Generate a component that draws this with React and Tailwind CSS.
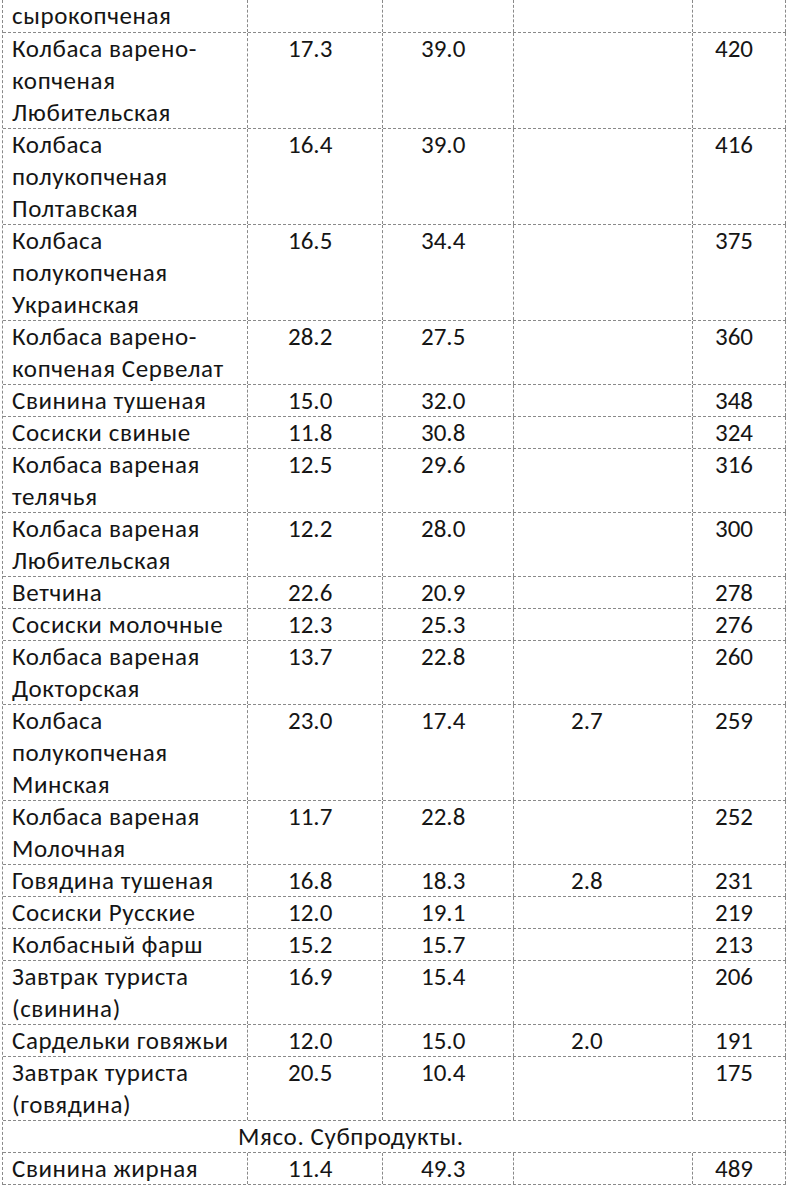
import React from 'react';

const rows = [
  { name: ['сырокопченая'], v: ['', '', '', ''] },
  { name: ['Колбаса варено-', 'копченая', 'Любительская'], v: ['17.3', '39.0', '', '420'] },
  { name: ['Колбаса', 'полукопченая', 'Полтавская'], v: ['16.4', '39.0', '', '416'] },
  { name: ['Колбаса', 'полукопченая', 'Украинская'], v: ['16.5', '34.4', '', '375'] },
  { name: ['Колбаса варено-', 'копченая Сервелат'], v: ['28.2', '27.5', '', '360'] },
  { name: ['Свинина тушеная'], v: ['15.0', '32.0', '', '348'] },
  { name: ['Сосиски свиные'], v: ['11.8', '30.8', '', '324'] },
  { name: ['Колбаса вареная', 'телячья'], v: ['12.5', '29.6', '', '316'] },
  { name: ['Колбаса вареная', 'Любительская'], v: ['12.2', '28.0', '', '300'] },
  { name: ['Ветчина'], v: ['22.6', '20.9', '', '278'] },
  { name: ['Сосиски молочные'], v: ['12.3', '25.3', '', '276'] },
  { name: ['Колбаса вареная', 'Докторская'], v: ['13.7', '22.8', '', '260'] },
  { name: ['Колбаса', 'полукопченая', 'Минская'], v: ['23.0', '17.4', '2.7', '259'] },
  { name: ['Колбаса вареная', 'Молочная'], v: ['11.7', '22.8', '', '252'] },
  { name: ['Говядина тушеная'], v: ['16.8', '18.3', '2.8', '231'] },
  { name: ['Сосиски Русские'], v: ['12.0', '19.1', '', '219'] },
  { name: ['Колбасный фарш'], v: ['15.2', '15.7', '', '213'] },
  { name: ['Завтрак туриста', '(свинина)'], v: ['16.9', '15.4', '', '206'] },
  { name: ['Сардельки говяжьи'], v: ['12.0', '15.0', '2.0', '191'] },
  { name: ['Завтрак туриста', '(говядина)'], v: ['20.5', '10.4', '', '175'] },
  { section: 'Мясо. Субпродукты.' },
  { name: ['Свинина жирная'], v: ['11.4', '49.3', '', '489'] },
];

const cellCls = 'border-r border-dashed border-[#8a8a8a] h-full';

export default function App() {
  return (
    <div
      className="w-[790px] h-[1188px] overflow-hidden bg-white pl-[2px] text-[#151515] text-[25px] leading-[32px]"
      style={{ fontFamily: 'Carlito, Calibri, "Open Sans", sans-serif' }}
    >
      <div className="w-[784px] border-l border-dashed border-[#8a8a8a]">
        {rows.map((r, i) => {
          if (r.section) {
            return (
              <div key={i} className="h-[32px] border-b border-r border-dashed border-[#8a8a8a] pl-[235px] tracking-[0.6px]">
                {r.section}
              </div>
            );
          }
          const h = i === 0 ? 33 : r.name.length * 32;
          return (
            <div
              key={i}
              className="flex border-b border-dashed border-[#8a8a8a]"
              style={{ height: h }}
            >
              <div className={`${cellCls} w-[245px] shrink-0 pl-[9px] whitespace-nowrap tracking-[0.6px]`}>
                {r.name.map((n, j) => (
                  <div key={j}>{n}</div>
                ))}
              </div>
              <div className={`${cellCls} w-[135px] shrink-0 pl-[40px]`}>{r.v[0]}</div>
              <div className={`${cellCls} w-[131px] shrink-0 pl-[38px]`}>{r.v[1]}</div>
              <div className={`${cellCls} w-[179px] shrink-0 pl-[57px]`}>{r.v[2]}</div>
              <div className={`${cellCls} w-[93px] shrink-0 pl-[22px]`}>{r.v[3]}</div>
            </div>
          );
        })}
      </div>
    </div>
  );
}
